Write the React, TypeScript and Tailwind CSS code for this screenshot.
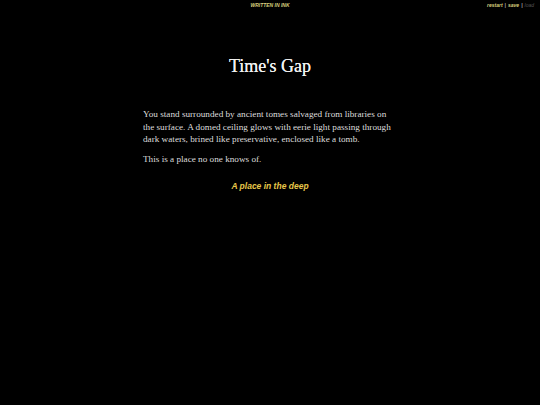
import React from 'react';

const App: React.FC = () => {
  return (
    <div className="min-h-[405px] w-full bg-black text-[#e6e6e6]">
      <div className="relative h-[10px]">
        <p className="pt-[3px] text-center text-[5px] font-bold italic uppercase leading-none text-[#d8cf7e] [font-family:'Liberation_Sans',sans-serif]">
          Written in Ink
        </p>
        <div className="absolute right-[6px] top-[3px] flex gap-[2px] text-[5px] font-bold italic leading-none [font-family:'Liberation_Sans',sans-serif]">
          <span className="text-[#d8cf7e]">restart</span>
          <span className="text-[#aaaaaa]">|</span>
          <span className="text-[#d8cf7e]">save</span>
          <span className="text-[#aaaaaa]">|</span>
          <span className="font-normal text-[#555555]">load</span>
        </div>
      </div>
      <div className="mx-auto w-[254px] pt-[45px] [font-family:'Liberation_Serif',serif]">
        <h1 className="text-center text-[18px] leading-[22px] text-[#f2f2f2] [text-shadow:0_0_0.4px_#f2f2f2]">Time's Gap</h1>
        <div className="pt-[31px] text-[9.2px] leading-[12.5px] text-[#dddddd]">
          <p className="whitespace-nowrap">
            You stand surrounded by ancient tomes salvaged from libraries on
            <br />
            the surface. A domed ceiling glows with eerie light passing through
            <br />
            dark waters, brined like preservative, enclosed like a tomb.
          </p>
          <p className="mt-[7px]">This is a place no one knows of.</p>
        </div>
        <p className="pt-[15px] text-center text-[8.5px] font-bold italic text-[#e8c84a] [font-family:'Liberation_Sans',sans-serif]">
          A place in the deep
        </p>
      </div>
    </div>
  );
};

export default App;
